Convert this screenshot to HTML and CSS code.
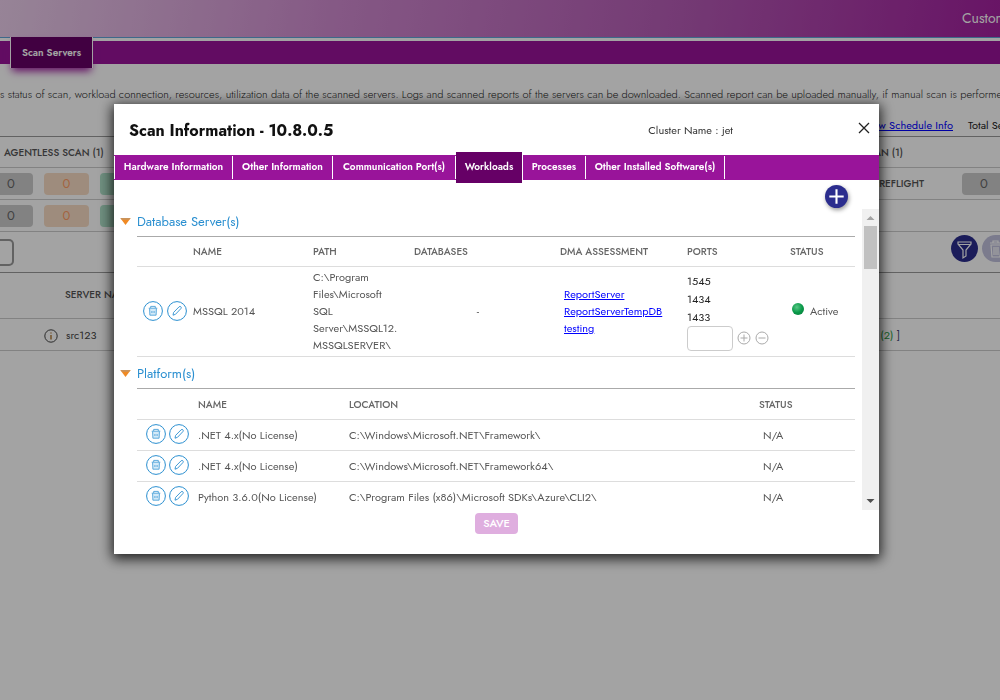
FILE: index.html
```html
<!DOCTYPE html>
<html lang="en">
<head>
<meta charset="utf-8">
<title>Scan Servers</title>
<link rel="stylesheet" href="styles.css">
</head>
<body>
<svg class="defs" aria-hidden="true">
  <symbol id="trash" viewBox="0 0 20 20"><circle cx="10" cy="10" r="9.4" fill="#fff" stroke="#2a8fd0"/><path d="M6.500 7.300h7l-.5 6.700h-6z" fill="#d4eaf8"/><path d="M5.700 7.200h8.600M7.700 7V5.400h4.600V7M6.600 7.500l.3 6.700h6.200l.3-6.700" fill="none" stroke="#4aa0d8" stroke-width=".9"/><path d="M8.300 10.200h1.200v1.600H8.300zM10.500 10.200h1.200v1.600h-1.200z" fill="#4aa0d8"/></symbol>
  <symbol id="pencil" viewBox="0 0 20 20"><circle cx="10" cy="10" r="9.4" fill="#fff" stroke="#2a8fd0"/><path d="M6 14.200l.6-2.800 5.500-5.600q1-.8 1.800 0t0 1.800L8.500 13.300z" fill="none" stroke="#2a8fd0" stroke-width=".9"/></symbol>
  <symbol id="caret" viewBox="0 0 12 8"><path d="M0 0h12L6 8z" fill="#f08a24"/><path d="M0 0h12l-2 2H2z" fill="#c9935c"/></symbol>
</svg>
<div class="page">
  <header class="top"><span>Customer</span></header>
  <nav class="nav"><a class="nav-tab" href="#">Scan Servers</a></nav>
  <p class="intro">s status of scan, workload connection, resources, utilization data of the scanned servers. Logs and scanned reports of the servers can be downloaded. Scanned report can be uploaded manually, if manual scan is performed.</p>
  <div class="row schedule"><a href="#">View Schedule Info</a><span class="total">Total Servers</span></div>
  <div class="row scan-head"><span>AGENTLESS SCAN (1)</span><span class="push">SCAN (1)</span></div>
  <div class="row chips"><b class="chip gray">0</b><b class="chip orange">0</b><b class="chip green"></b><span class="push label">PREFLIGHT</span><b class="chip gray last">0</b></div>
  <div class="row chips"><b class="chip gray">0</b><b class="chip orange">0</b><b class="chip green"></b></div>
  <div class="row tools">
    <input class="search" type="text" aria-label="Search">
    <button class="round push" aria-label="Filter"><svg viewBox="0 0 27 27"><path d="M7 7h13v2l-5 6v6l-3 2v-8L7 9zM8 9.5h11" fill="none" stroke="#fff" stroke-width="1.2"/></svg></button>
    <button class="round faded" aria-label="Delete"><svg viewBox="0 0 27 27"><path d="M8 8h12M11 8V6h5v2M9 10l1 12h8l1-12zM12 12v8M14 12v8M16 12v8" fill="none" stroke="#fff" stroke-width="1.2"/></svg></button>
  </div>
  <div class="row server-head"><span>SERVER NAME</span></div>
  <div class="row server"><svg class="info" viewBox="0 0 14 14"><circle cx="7" cy="7" r="6.2" fill="none" stroke="#444"/><path d="M7 6v4.5M7 3.4v1.2" stroke="#a86b20" stroke-width="1.3"/></svg><span>src123</span><span class="push count"><i>(2)</i> <em>]</em></span></div>
</div>

<div class="overlay">
  <section class="modal" role="dialog" aria-labelledby="title">
    <header class="modal-head">
      <h1 id="title">Scan Information - 10.8.0.5</h1>
      <span class="cluster">Cluster Name : jet</span>
      <button class="close" aria-label="Close"><svg viewBox="0 0 12 12"><path d="M1 1l10 10M11 1L1 11" stroke="#222" stroke-width="1.3"/></svg></button>
    </header>
    <div class="tabs" role="tablist">
      <button role="tab">Hardware Information</button><button role="tab">Other Information</button><button role="tab">Communication Port(s)</button><button role="tab" class="active" aria-selected="true">Workloads</button><button role="tab">Processes</button><button role="tab">Other Installed Software(s)</button>
    </div>
    <div class="add-row"><button class="add" aria-label="Add workload"><svg viewBox="0 0 24 24"><path d="M12 4.500v15M4.500 12h15" stroke="#fff" stroke-width="2.200"/></svg></button></div>
    <div class="body">
      <div class="content">
        <h2><svg viewBox="0 0 12 8"><use href="#caret"/></svg>Database Server(s)</h2>
        <table class="db">
          <thead><tr><th></th><th>NAME</th><th>PATH</th><th>DATABASES</th><th>DMA ASSESSMENT</th><th>PORTS</th><th>STATUS</th></tr></thead>
          <tbody><tr>
            <td><div class="acts"><button aria-label="Delete"><svg><use href="#trash"/></svg></button><button aria-label="Edit"><svg><use href="#pencil"/></svg></button></div></td>
            <td>MSSQL 2014</td>
            <td>C:\Program<br>Files\Microsoft<br>SQL<br>Server\MSSQL12.<br>MSSQLSERVER\</td>
            <td class="dash">-</td>
            <td class="links"><a href="#">ReportServer</a><br><a href="#">ReportServerTempDB</a><br><a href="#">testing</a></td>
            <td class="ports"><div>1545</div><div>1434</div><div>1433</div>
              <div class="port-add"><input type="text" aria-label="Port"><button aria-label="Add port"><svg viewBox="0 0 14 14"><path d="M7 3.500v7M3.500 7h7"/><circle cx="7" cy="7" r="6"/></svg></button><button aria-label="Remove port"><svg viewBox="0 0 14 14"><path d="M3.500 7h7"/><circle cx="7" cy="7" r="6"/></svg></button></div></td>
            <td><div class="status"><span class="dot"></span>Active</div></td>
          </tr></tbody>
        </table>
        <h2><svg viewBox="0 0 12 8"><use href="#caret"/></svg>Platform(s)</h2>
        <table class="platform">
          <thead><tr><th></th><th>NAME</th><th>LOCATION</th><th>STATUS</th></tr></thead>
          <tbody>
            <tr><td><div class="acts"><button aria-label="Delete"><svg><use href="#trash"/></svg></button><button aria-label="Edit"><svg><use href="#pencil"/></svg></button></div></td><td>.NET 4.x(No License)</td><td>C:\Windows\Microsoft.NET\Framework\</td><td>N/A</td></tr>
            <tr><td><div class="acts"><button aria-label="Delete"><svg><use href="#trash"/></svg></button><button aria-label="Edit"><svg><use href="#pencil"/></svg></button></div></td><td>.NET 4.x(No License)</td><td>C:\Windows\Microsoft.NET\Framework64\</td><td>N/A</td></tr>
            <tr><td><div class="acts"><button aria-label="Delete"><svg><use href="#trash"/></svg></button><button aria-label="Edit"><svg><use href="#pencil"/></svg></button></div></td><td>Python 3.6.0(No License)</td><td>C:\Program Files (x86)\Microsoft SDKs\Azure\CLI2\</td><td>N/A</td></tr>
          </tbody>
        </table>
      </div>
      <div class="scrollbar" aria-hidden="true"><svg viewBox="0 0 17 17"><path d="M4.500 11h8l-4-4z" fill="#a3a3a3"/></svg><div class="thumb"></div><svg class="down" viewBox="0 0 17 17"><path d="M4.500 6h8l-4 4z" fill="#505050"/></svg></div>
    </div>
    <footer><button class="save" disabled>SAVE</button></footer>
  </section>
</div>
</body>
</html>
```
FILE: styles.css
```css
* { box-sizing: border-box; }
body { margin: 0; background: #fff; color: #444; font: 11px/17px Jost, Lato, "Open Sans", sans-serif; overflow: hidden; }
button, input { font: inherit; padding: 0; margin: 0; }
button { border: 0; background: none; color: inherit; }
svg { display: block; }
.defs { position: absolute; width: 0; height: 0; }
a { color: #00f; text-decoration: underline; }

.page { min-height: 100vh; overflow: hidden; }
.top { height: 38px; display: flex; align-items: center; justify-content: flex-end; border-bottom: 1px solid #62a4d8; background: linear-gradient(100deg, #eccfec, #d08ad0 34%, #b65bb6 68%, #a3209f); color: #fff; font-size: 14px; overflow: hidden; }
.top span { width: 38px; white-space: nowrap; }
.nav { height: 23px; margin-top: 3px; padding-left: 10px; display: flex; align-items: center; background: #99149a; }
.nav-tab { width: 83px; height: 31px; border: solid #fff; border-width: 0 1px; background: #660066; box-shadow: 0 5px 8px -2px #99149a; color: #fff; font-weight: 600; font-size: 10px; line-height: 31px; text-align: center; text-decoration: none; }
.intro { margin: 22px 0 13px; white-space: nowrap; color: #222; font-weight: 300; }
.row { display: flex; align-items: center; border-bottom: 1px solid #ccc; white-space: nowrap; }
.push { margin-left: auto; }
.schedule { height: 21px; padding-bottom: 2px; border-color: #999; justify-content: flex-end; }
.total { width: 32px; margin-left: 15px; color: #222; }
.scan-head { height: 31px; padding: 0 97px 0 4px; font-size: 10px; font-weight: 500; }
.scan-head, .label, .server-head { color: #555; }
.label { font-size: 10px; font-weight: 500; }
.chips { height: 32px; gap: 11px; }
.chip { width: 45px; height: 22px; border-radius: 4px; text-align: center; font-size: 13px; font-weight: normal; line-height: 22px; flex: none; }
.chip:first-child { width: 33px; padding-right: 11px; border-radius: 0 4px 4px 0; }
.chip.last { width: 38px; margin-left: 27px; padding-left: 6px; border-radius: 4px 0 0 4px; }
.gray { background: #ccc; color: #666; }
.orange { background: #f8dcc4; color: #ff9c66; }
.green { background: #aee0c8; }
.tools { height: 41px; border-color: #999; gap: 4px; }
.search { width: 14px; height: 27px; border: 2px solid #999; border-left: 0; border-radius: 0 5px 5px 0; background: #fff; }
.round { width: 27px; height: 27px; border-radius: 50%; background: #2b2d8e; flex: none; margin-bottom: 8px; }
.round.faded { width: 18px; overflow: hidden; border-radius: 14px 0 0 14px; background: #c0c0dd; }
.round svg { width: 27px; height: 27px; }
.server-head { height: 46px; padding: 0 0 2px 65px; font-size: 10px; font-weight: 500; }
.server { height: 32px; padding: 2px 100px 0 44px; gap: 8px; }
.info { width: 14px; height: 14px; }
.count i { color: #2c9b44; font-style: normal; }
.count em { color: #447; font-style: normal; }

.overlay { position: fixed; inset: 0; padding: 104px 121px 0 114px; background: rgba(0, 0, 0, .36); }
.modal { background: #fff; box-shadow: 0 3px 12px 2px rgba(0, 0, 0, .8); }
.modal-head { height: 51px; padding: 0 9px 0 15px; display: flex; align-items: center; }
h1 { margin: 0; padding-top: 2px; color: #111; font-size: 16px; line-height: 24px; font-weight: 700; }
.cluster { margin-left: auto; margin-right: 125px; padding-top: 2px; color: #333; }
.close svg { width: 12px; height: 12px; margin-bottom: 3px; }
.tabs { height: 25px; display: grid; grid-template: 25px / 119px 100px 123px 67px 63px 139px; align-items: center; background: #99149a; color: #fff; }
.tabs button { height: 23px; padding-bottom: 2px; border-right: 1px solid #fff; font-size: 10px; line-height: 15px; font-weight: 600; white-space: nowrap; }
.tabs button:first-child { border-left: 1px solid #fff; }
.tabs .active { height: 31px; background: #660066; }
.add-row { height: 29px; padding: 5px 31px 0 0; display: flex; justify-content: flex-end; }
.add { width: 23px; height: 23px; border-radius: 50%; background: #2b2d8e; box-shadow: 1px 2px 4px #999; }
.body { height: 301px; display: flex; }
.content { flex: 1; padding: 0 6px; overflow: hidden; }
h2 { margin: 0; height: 27px; padding-bottom: 2px; display: flex; align-items: center; gap: 6px; color: #2a8fd0; font-size: 13px; font-weight: normal; }
h2 svg { width: 11px; height: 7px; }
table + h2 { height: 31px; padding: 2px 0 0; }
table { width: calc(100% - 18px); margin-left: 17px; table-layout: fixed; border-collapse: collapse; border-top: 1px solid #aaa; }
tr { border-bottom: 1px solid #ddd; }
th { height: 30px; padding: 0; color: #666; font-size: 10px; font-weight: 500; text-align: left; }
td { padding: 0; color: #555; }
.db th:nth-child(1) { width: 56px; }
.db th:nth-child(2) { width: 120px; }
.db th:nth-child(3) { width: 101px; }
.db th:nth-child(4) { width: 146px; }
.db th:nth-child(5) { width: 127px; }
.db th:nth-child(6) { width: 103px; }
.db td { height: 90px; }
.dash { padding-right: 18px; text-align: center; }
.links { padding-left: 4px; }
.ports { color: #222; line-height: 18px; }
.port-add { display: flex; align-items: center; gap: 4px; padding-bottom: 1px; }
.port-add input { width: 46px; height: 25px; border: 1px solid #ccc; border-radius: 4px; }
.port-add svg { width: 14px; height: 14px; fill: none; stroke: #aaa; }
.status { display: flex; align-items: center; gap: 6px; padding-left: 2px; }
.dot { width: 12px; height: 12px; margin-bottom: 5px; border-radius: 50%; background: radial-gradient(circle at 40% 35%, #58c785, #0a9a4a 50%, #087536); }
.acts { display: flex; gap: 4px; padding: 0 0 2px 6px; }
.acts svg { width: 20px; height: 20px; }
.platform th:nth-child(1) { width: 61px; }
.platform th:nth-child(2) { width: 151px; }
.platform th:nth-child(4) { width: 96px; }
.platform td { height: 31px; padding-top: 1px; }
.platform th { height: 31px; padding-top: 1px; }
.platform td:last-child { padding-left: 4px; }
.platform .acts { padding: 0 0 3px 9px; gap: 3px; }
.platform tbody tr:last-child { border-bottom: 0; }
.scrollbar { width: 17px; display: flex; flex-direction: column; background: #f0f0f0; }
.scrollbar svg { width: 17px; height: 17px; }
.thumb { height: 43px; margin: 0 2px; background: #c1c1c1; }
.down { margin-top: auto; }
footer { padding: 3px 0 20px; display: flex; justify-content: center; }
.save { width: 43px; height: 21px; border-radius: 4px; background: #dfaedf; color: #fff; font-weight: 500; font-size: 11px; }
```
